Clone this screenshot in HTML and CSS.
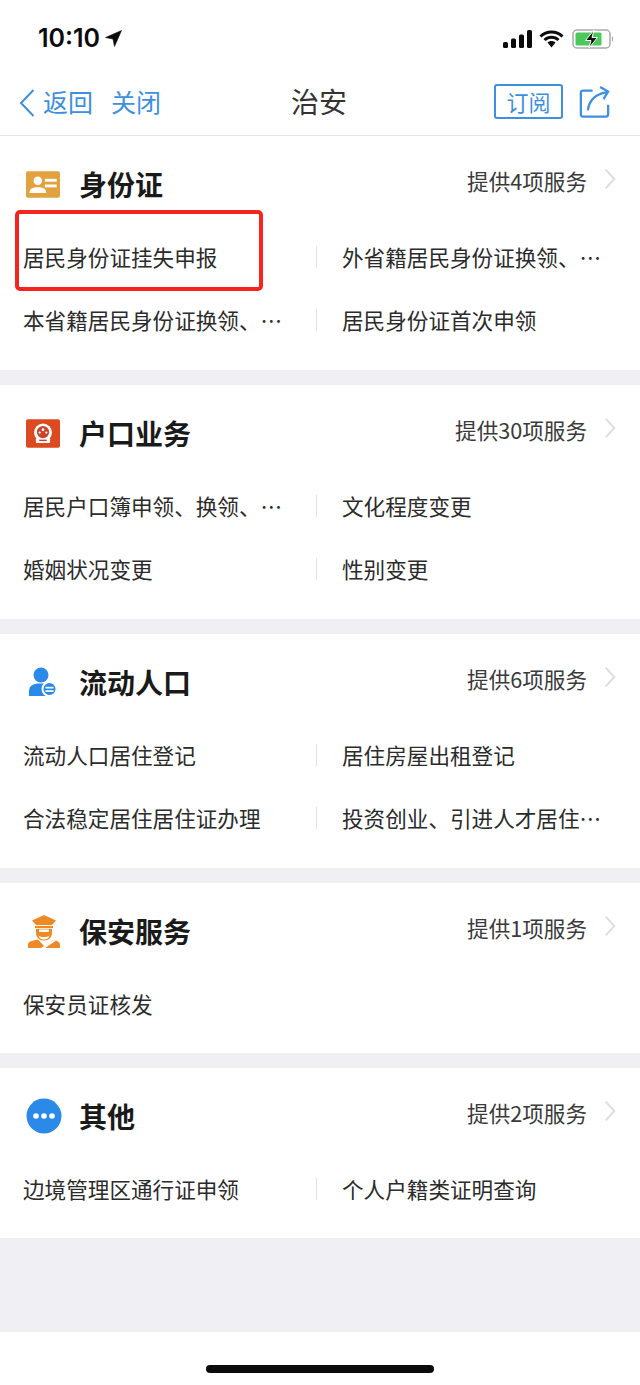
FILE: index.html
```html
<!DOCTYPE html>
<html lang="zh-CN">
<head>
    <meta charset="UTF-8">
    <meta name="viewport" content="width=device-width, initial-scale=1.0">
    <title>治安</title>
    <link rel="stylesheet" href="styles.css">
</head>
<body>

<div class="page">
    <!-- 状态栏 -->
    <div class="status">
        <div class="status-left">
            <span class="time">10:10</span>
            <svg class="loc" width="17" height="17" viewBox="0 0 17 17"><path d="M16.500 .5 L.5 7.500 L8 9 L9.500 16.500 Z" fill="#0b0b0b" stroke="#0b0b0b" stroke-width=".6"/></svg>
        </div>
        <div class="status-right">
            <svg class="signal" width="29" height="18" viewBox="0 0 29 18"><rect x="0" y="12" width="5" height="6" rx="1.500" fill="#0b0b0b"/><rect x="8" y="8.500" width="5" height="9.500" rx="1.500" fill="#0b0b0b"/><rect x="16" y="4.500" width="5" height="13.500" rx="1.500" fill="#0b0b0b"/><rect x="24" y="0" width="5" height="18" rx="1.500" fill="#0b0b0b"/></svg>
            <svg width="25" height="18" viewBox="0 0 25 18"><path d="M1.500 6.500 C7.500 .5 17.500 .5 23.500 6.500 M5.500 10 C9.500 6.200 15.500 6.200 19.500 10" fill="none" stroke="#0b0b0b" stroke-width="3"/><path d="M8.500 12.500 C10.800 10.500 14.200 10.500 16.500 12.500 L12.500 17.500 Z" fill="#0b0b0b"/></svg>
            <svg width="42" height="20" viewBox="0 0 42 20"><rect x="1" y="1" width="37" height="18" rx="4" fill="#fff" stroke="#a9aaa9" stroke-width="1.500"/><rect x="3.500" y="3.500" width="26" height="13" rx="1.500" fill="#4cc75b"/><path d="M40 7 C41.500 7.500 41.500 12.500 40 13 Z" fill="#a9aaa9"/><path d="M22 1 L13.500 11.500 H19 L17 19 L25.500 8.500 H20 Z" fill="#111" stroke="#fff" stroke-width="1"/></svg>
        </div>
    </div>

    <!-- 导航栏 -->
    <div class="nav">
        <div class="nav-left">
            <svg class="back" width="16" height="28" viewBox="0 0 16 28"><path d="M14.500 1 L2 14 L14.500 27" fill="none" stroke="#3d8fe0" stroke-width="2"/></svg>
            <span class="nav-link">返回</span>
            <span class="nav-link close">关闭</span>
        </div>
        <div class="nav-title">治安</div>
        <div class="nav-right">
            <span class="sub-btn">订阅</span>
            <svg width="31" height="32" viewBox="0 0 32 34"><path d="M14 5 H4 Q1.500 5 1.500 7.500 V30 Q1.500 32.500 4 32.500 H28 Q30.500 32.500 30.500 30 V20" fill="none" stroke="#3d8fe0" stroke-width="2.400"/><path d="M9 26 C10 16 15 9 29 6.500 M22 1 L30.500 6 L25.500 14" fill="none" stroke="#3d8fe0" stroke-width="2.400"/></svg>
        </div>
    </div>

    <!-- 身份证 -->
    <section class="card">
        <div class="card-head">
            <div class="head-left">
                <svg width="34" height="27" viewBox="0 0 36 28"><rect width="36" height="28" rx="2" fill="#e2a23f"/><circle cx="12.500" cy="10" r="4.500" fill="#fff"/><path d="M3.500 23 C4 17.500 8 17 12.500 17 C17 17 21 17.500 21.500 23 Z" fill="#fff"/><rect x="20" y="8" width="12.500" height="3" fill="#fff"/><rect x="20" y="14" width="12.500" height="3" fill="#fff"/></svg>
                <h2 class="title">身份证</h2>
            </div>
            <div class="head-right"><span>提供4项服务</span><svg class="arrow" width="12" height="22" viewBox="0 0 14 24"><path d="M2 1 L12 12 L2 23" fill="none" stroke="#dedede" stroke-width="2.400"/></svg></div>
        </div>
        <div class="row">
            <div class="item">居民身份证挂失申报</div>
            <div class="item">外省籍居民身份证换领、…</div>
        </div>
        <div class="row">
            <div class="item">本省籍居民身份证换领、…</div>
            <div class="item">居民身份证首次申领</div>
        </div>
        <div class="mark"></div>
    </section>

    <!-- 户口业务 -->
    <section class="card">
        <div class="card-head">
            <div class="head-left">
                <svg width="34" height="29" viewBox="0 0 36 30"><rect width="36" height="30" rx="2" fill="#dd4a1f"/><circle cx="18" cy="14" r="9.500" fill="#fff"/><rect x="10.500" y="20" width="15" height="5" rx="1" fill="#fff"/><circle cx="18" cy="13.500" r="6.500" fill="#c9452a"/><circle cx="18" cy="11" r="1.500" fill="#fff"/><circle cx="14.500" cy="14" r="1.200" fill="#fff"/><circle cx="21.500" cy="14" r="1.200" fill="#fff"/><rect x="14" y="21.500" width="8" height="1.500" fill="#c9452a"/></svg>
                <h2 class="title">户口业务</h2>
            </div>
            <div class="head-right"><span>提供30项服务</span><svg class="arrow" width="12" height="22" viewBox="0 0 14 24"><path d="M2 1 L12 12 L2 23" fill="none" stroke="#dedede" stroke-width="2.400"/></svg></div>
        </div>
        <div class="row">
            <div class="item">居民户口簿申领、换领、…</div>
            <div class="item">文化程度变更</div>
        </div>
        <div class="row">
            <div class="item">婚姻状况变更</div>
            <div class="item">性别变更</div>
        </div>
    </section>

    <!-- 流动人口 -->
    <section class="card">
        <div class="card-head">
            <div class="head-left">
                <svg class="ico-in" width="29" height="30" viewBox="0 0 29 30"><circle cx="13" cy="8" r="7.500" fill="#2b8ae8"/><path d="M1 29 V24 C1 18 6 16.500 13 16.500 C20 16.500 25 18 25 24 V29 Z" fill="#2b8ae8"/><circle cx="21.500" cy="22" r="7" fill="#2b8ae8" stroke="#fff" stroke-width="2"/><rect x="17.500" y="19.800" width="8" height="1.700" fill="#fff"/><rect x="17.500" y="23.200" width="8" height="1.700" fill="#fff"/></svg>
                <h2 class="title">流动人口</h2>
            </div>
            <div class="head-right"><span>提供6项服务</span><svg class="arrow" width="12" height="22" viewBox="0 0 14 24"><path d="M2 1 L12 12 L2 23" fill="none" stroke="#dedede" stroke-width="2.400"/></svg></div>
        </div>
        <div class="row">
            <div class="item">流动人口居住登记</div>
            <div class="item">居住房屋出租登记</div>
        </div>
        <div class="row">
            <div class="item">合法稳定居住居住证办理</div>
            <div class="item">投资创业、引进人才居住…</div>
        </div>
    </section>

    <!-- 保安服务 -->
    <section class="card">
        <div class="card-head">
            <div class="head-left">
                <svg class="ico-in" width="32" height="33" viewBox="0 0 32 33"><path d="M4 5.500 L16 0 L28 5.500 L24 10 H8 Z" fill="#ee8a25"/><rect x="7" y="11" width="18" height="2.200" fill="#ee8a25"/><path d="M8 14 H24 V17 C24 22.500 21 25.500 16 25.500 C11 25.500 8 22.500 8 17 Z" fill="#ee8a25"/><path d="M11 14.500 H21 V17 H11 Z M10.500 20.500 C13 22.500 19 22.500 21.500 20.500 C20.500 23.500 18.500 24.500 16 24.500 C13.500 24.500 11.500 23.500 10.500 20.500 Z" fill="#fff"/><path d="M0 33 V29.500 C0 26.500 5 25.500 10 24.500 L18 33 Z M32 33 V29.500 C32 26.500 28 25.500 25 25 L14 33 Z" fill="#ee8a25"/><path d="M13 33 L26 24.500 L27.500 26 L17 33 Z" fill="#fff"/></svg>
                <h2 class="title">保安服务</h2>
            </div>
            <div class="head-right"><span>提供1项服务</span><svg class="arrow" width="12" height="22" viewBox="0 0 14 24"><path d="M2 1 L12 12 L2 23" fill="none" stroke="#dedede" stroke-width="2.400"/></svg></div>
        </div>
        <div class="row">
            <div class="item">保安员证核发</div>
        </div>
    </section>

    <!-- 其他 -->
    <section class="card">
        <div class="card-head">
            <div class="head-left">
                <svg width="36" height="36" viewBox="0 0 36 36"><circle cx="18" cy="18" r="17.500" fill="#2b8ae8"/><circle cx="10" cy="18" r="2.800" fill="#fff"/><circle cx="18" cy="18" r="2.800" fill="#fff"/><circle cx="26" cy="18" r="2.800" fill="#fff"/></svg>
                <h2 class="title">其他</h2>
            </div>
            <div class="head-right"><span>提供2项服务</span><svg class="arrow" width="12" height="22" viewBox="0 0 14 24"><path d="M2 1 L12 12 L2 23" fill="none" stroke="#dedede" stroke-width="2.400"/></svg></div>
        </div>
        <div class="row">
            <div class="item">边境管理区通行证申领</div>
            <div class="item">个人户籍类证明查询</div>
        </div>
    </section>

    <div class="filler"></div>

    <!-- 底部横条 -->
    <div class="home-bar"><span class="home-line"></span></div>
</div>

</body>
</html>
```

FILE: styles.css
```css
* {
    box-sizing: border-box;
}
body {
    margin: 0;
    background-color: #fff;
    font-family: "Noto Sans CJK SC", "Liberation Sans", sans-serif;
    color: #2b2b2b;
}
.page {
    width: 640px;
    height: 1385px;
    display: flex;
    flex-direction: column;
    background-color: #f0eff4;
    overflow: hidden;
}
.status {
    height: 70px;
    flex: none;
    background-color: #fff;
    display: flex;
    justify-content: space-between;
    align-items: flex-start;
    padding: 21px 26px 0 38px;
}
.status-left {
    display: flex;
    align-items: center;
    gap: 5px;
}
.time {
    font-family: Inter, sans-serif;
    font-size: 25px;
    font-weight: 600;
    line-height: 34px;
    color: #0b0b0b;
}
.status-right {
    display: flex;
    align-items: center;
    gap: 8px;
    padding-top: 8px;
}
.signal {
    margin-right: -1px;
}
.nav {
    height: 66px;
    flex: none;
    background-color: #fff;
    border-bottom: 1px solid #e4e4e6;
    display: flex;
    justify-content: space-between;
    align-items: center;
    padding: 0 30px 0 19px;
    position: relative;
}
.nav-left {
    display: flex;
    align-items: center;
}
.back {
    margin-right: 8px;
}
.nav-link {
    font-size: 25px;
    color: #3d8fe0;
    line-height: 34px;
    margin-bottom: 4px;
}
.close {
    margin-left: 18px;
}
.nav-title {
    font-size: 28px;
    color: #333;
    line-height: 40px;
    position: absolute;
    left: 291px;
    top: 11px;
}
.nav-right {
    display: flex;
    align-items: center;
    gap: 16px;
    padding-bottom: 2px;
}
.sub-btn {
    width: 69px;
    height: 35px;
    border: 2px solid #3d8fe0;
    border-radius: 3px;
    color: #3d8fe0;
    font-size: 22px;
    line-height: 30px;
    text-align: center;
}
.card {
    background-color: #fff;
    margin-bottom: 15px;
    padding-bottom: 16px;
    position: relative;
    flex: none;
}
.card-head {
    height: 91px;
    display: flex;
    justify-content: space-between;
    padding: 28px 24px 0 26px;
}
.head-left {
    display: grid;
    grid-template-columns: 36px auto;
    column-gap: 17px;
    align-items: center;
    height: 40px;
}
.ico-in {
    margin-left: 2px;
}
.title {
    margin: 0;
    font-size: 28px;
    font-weight: 700;
    line-height: 40px;
    color: #1a1a1a;
}
.head-right {
    display: flex;
    height: 36px;
    align-items: flex-start;
    font-size: 21.600px;
    line-height: 36px;
    color: #3a3a3a;
    margin-top: -1px;
}
.arrow {
    margin: 5px 0 0 17px;
}
.row {
    height: 63px;
    padding-bottom: 4px;
    display: grid;
    grid-template-columns: 316px 324px;
    align-items: center;
}
.row + .row {
    margin-bottom: 1px;
}
.item {
    font-size: 21.600px;
    line-height: 30px;
    padding-left: 23px;
    white-space: nowrap;
    color: #2b2b2b;
}
.item + .item {
    padding-left: 25px;
    height: 22px;
    line-height: 22px;
    border-left: 1px solid #e2e2e2;
}
.mark {
    position: absolute;
    left: 15px;
    top: 74px;
    width: 248px;
    height: 81px;
    border: 4px solid #f5241c;
    border-radius: 5px;
}
.filler {
    flex: 1;
    margin-top: -15px;
}
.home-bar {
    height: 53px;
    flex: none;
    background-color: #fff;
    display: flex;
    justify-content: center;
    padding-top: 33px;
}
.home-line {
    width: 228px;
    height: 8px;
    border-radius: 4px;
    background-color: #0b0b0b;
}
```
